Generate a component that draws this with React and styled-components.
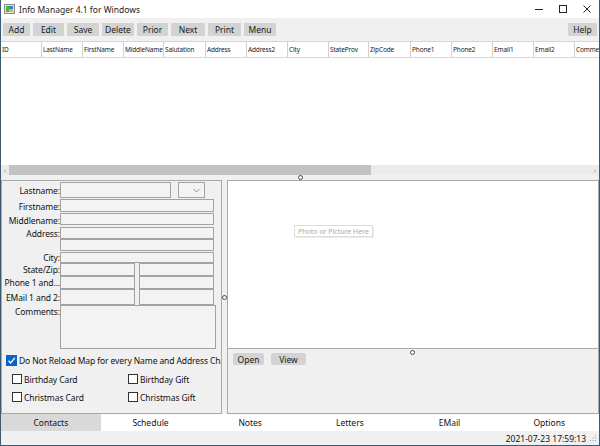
import React from "react";
import styled, { createGlobalStyle } from "styled-components";

const Global = createGlobalStyle`
  html, body { margin: 0; padding: 0; background: #ffffff; }
  * { box-sizing: border-box; }
`;

const Window = styled.div`
  width: 600px;
  height: 446px;
  border: 1px solid #3d5a70;
  border-top: none;
  background: #f0f0f0;
  display: flex;
  flex-direction: column;
  overflow: hidden;
  font-family: "Noto Sans", "Open Sans", sans-serif;
  color: #111;
`;

const TitleBar = styled.div`
  height: 18px;
  background: #ffffff;
  display: flex;
  align-items: center;
  padding-left: 3px;
  flex-shrink: 0;
`;

const TitleText = styled.span`
  font-size: 8.5px;
  margin-left: 4px;
  color: #1a1a1a;
`;

const Controls = styled.div`
  margin-left: auto;
  display: flex;
  height: 100%;
`;

const Ctl = styled.div`
  width: 24px;
  height: 100%;
  display: flex;
  align-items: center;
  justify-content: center;
`;

const Toolbar = styled.div`
  height: 23px;
  display: flex;
  align-items: center;
  gap: 3px;
  padding: 0 2px 0 2px;
  flex-shrink: 0;
`;

const TButton = styled.div`
  width: ${(p) => p.$w}px;
  height: 13px;
  background: #d3d3d3;
  border-radius: 1px;
  font-size: 8.5px;
  display: flex;
  align-items: center;
  justify-content: center;
  color: #1a1a1a;
  margin-left: ${(p) => (p.$push ? "auto" : "0")};
`;

const Grid = styled.div`
  display: flex;
  flex-direction: column;
  background: #ffffff;
  flex-shrink: 0;
`;

const HeaderRow = styled.div`
  height: 17px;
  display: flex;
  border-top: 1px solid #d6d6d6;
  border-bottom: 1px solid #d6d6d6;
  overflow: hidden;
`;

const HeaderCell = styled.div`
  width: ${(p) => p.$w}px;
  flex-shrink: 0;
  border-right: 1px solid #d2d2d2;
  font-size: 6.5px;
  letter-spacing: -0.15px;
  padding-left: 1px;
  display: flex;
  align-items: center;
  color: #222;
  white-space: nowrap;
  overflow: hidden;
`;

const GridBody = styled.div`
  height: 107px;
  background: #ffffff;
`;

const ScrollBar = styled.div`
  height: 10px;
  display: flex;
  background: #ebebeb;
`;

const ScrollArrow = styled.div`
  width: 8px;
  font-size: 7px;
  color: #9a9a9a;
  display: flex;
  align-items: center;
  justify-content: center;
  line-height: 1;
  margin-left: ${(p) => (p.$right ? "auto" : "0")};
`;

const Thumb = styled.div`
  width: 362px;
  background: #c2c2c2;
`;

const HSplitter = styled.div`
  height: 5px;
  display: flex;
  align-items: center;
  justify-content: center;
  flex-shrink: 0;
`;

const Handle = styled.div`
  width: 5px;
  height: 5px;
  border-radius: 50%;
  border: 1px solid #4a4a4a;
  background: #ffffff;
`;

const Main = styled.div`
  height: 234px;
  display: flex;
  flex-shrink: 0;
`;

const LeftPanel = styled.div`
  width: 221px;
  border: 1px solid #a8a8a8;
  padding: 1px 0 0 0;
  overflow: hidden;
  display: flex;
  flex-direction: column;
`;

const FormRow = styled.div`
  height: ${(p) => p.$h}px;
  display: flex;
  flex-shrink: 0;
`;

const Label = styled.div`
  width: 58px;
  flex-shrink: 0;
  font-size: 8.5px;
  letter-spacing: -0.1px;
  line-height: 11px;
  white-space: nowrap;
  display: flex;
  justify-content: flex-end;
  align-items: ${(p) => (p.$top ? "flex-start" : "center")};
  padding-top: ${(p) => (p.$top ? "1px" : "0")};
  color: #111;
`;

const Field = styled.div`
  width: ${(p) => p.$w}px;
  height: ${(p) => p.$h}px;
  border: 1px solid #a3a3a3;
  background: #f3f3f3;
  margin-left: ${(p) => p.$ml || 0}px;
  flex-shrink: 0;
  display: flex;
  align-items: center;
  justify-content: flex-end;
  padding-right: 4px;
`;

const CheckRow = styled.div`
  display: flex;
  align-items: center;
  height: ${(p) => p.$h}px;
  margin-top: ${(p) => p.$mt}px;
  padding-left: ${(p) => p.$pl}px;
  white-space: nowrap;
  flex-shrink: 0;
`;

const CheckItem = styled.div`
  display: flex;
  align-items: center;
  width: ${(p) => (p.$w ? `${p.$w}px` : "auto")};
  font-size: 8.5px;
  letter-spacing: -0.1px;
  color: #111;
`;

const Box = styled.div`
  width: ${(p) => p.$s}px;
  height: ${(p) => p.$s}px;
  border: 1px solid ${(p) => (p.$checked ? "#0a64c8" : "#333")};
  background: ${(p) => (p.$checked ? "#0a64c8" : "#ffffff")};
  margin-right: 2px;
  display: flex;
  align-items: center;
  justify-content: center;
  flex-shrink: 0;
`;

const VSplitter = styled.div`
  width: 5px;
  display: flex;
  align-items: center;
  justify-content: center;
  flex-shrink: 0;
`;

const RightPanel = styled.div`
  flex: 1;
  border: 1px solid #a8a8a8;
  display: flex;
  flex-direction: column;
`;

const Picture = styled.div`
  height: 168px;
  background: #ffffff;
  border-bottom: 1px solid #a8a8a8;
  padding: 44px 0 0 66px;
  flex-shrink: 0;
  display: flex;
  align-items: flex-start;
`;

const PhotoLabel = styled.div`
  display: flex;
  align-items: center;
  height: 12px;
  padding: 0 3px;
  border: 1px solid #dcdcdc;
  box-shadow: 1px 1px 0 #ececec;
  font-size: 7px;
  color: #a9a9a9;
  white-space: nowrap;
`;

const PicControls = styled.div`
  position: relative;
  display: flex;
  gap: 7px;
  padding: 4px 0 0 5px;
`;

const FloatHandle = styled(Handle)`
  position: absolute;
  left: 50%;
  top: 1px;
  margin-left: -3px;
`;

const SmallButton = styled.div`
  width: ${(p) => p.$w}px;
  height: 12px;
  background: #d3d3d3;
  border-radius: 2px;
  font-size: 8.5px;
  display: flex;
  align-items: center;
  justify-content: center;
  color: #1a1a1a;
`;

const Tabs = styled.div`
  height: 17px;
  display: flex;
  background: #ffffff;
  flex-shrink: 0;
`;

const Tab = styled.div`
  flex: 1;
  display: flex;
  align-items: center;
  justify-content: center;
  font-size: 8.5px;
  background: ${(p) => (p.$active ? "#d9d9d9" : "#ffffff")};
  color: #111;
`;

const Status = styled.div`
  flex: 1;
  display: flex;
  align-items: center;
  justify-content: flex-end;
  padding-right: 2px;
  font-size: 8.5px;
  color: #111;
  gap: 3px;
`;

const buttons = [
  ["Add", 27],
  ["Edit", 31],
  ["Save", 32],
  ["Delete", 32],
  ["Prior", 31],
  ["Next", 34],
  ["Print", 33],
  ["Menu", 32],
];

const columns = [
  ["ID", 41],
  ["LastName", 41],
  ["FirstName", 41],
  ["MiddleName", 40],
  ["Salutation", 42],
  ["Address", 41],
  ["Address2", 41],
  ["City", 41],
  ["StateProv", 40],
  ["ZipCode", 42],
  ["Phone1", 41],
  ["Phone2", 41],
  ["Email1", 41],
  ["Email2", 41],
  ["Comments", 60],
];

const tabs = ["Contacts", "Schedule", "Notes", "Letters", "EMail", "Options"];

const AppIcon = () => (
  <svg width="11" height="10" viewBox="0 0 11 10">
    <rect x="0.5" y="0.5" width="10" height="9" fill="#e8e4d0" stroke="#8a8a8a" />
    <rect x="2" y="2" width="3" height="6" fill="#4caf50" />
    <rect x="5" y="2" width="4" height="3" fill="#2e8bd8" />
    <rect x="5" y="5" width="4" height="3" fill="#f0b030" />
  </svg>
);

const Check = () => (
  <svg width="9" height="9" viewBox="0 0 9 9">
    <polyline points="1.5,4.8 3.6,7 7.8,1.8" fill="none" stroke="#ffffff" strokeWidth="1.3" />
  </svg>
);

export default function App() {
  return (
    <>
      <Global />
      <Window>
        <TitleBar>
          <AppIcon />
          <TitleText>Info Manager 4.1 for Windows</TitleText>
          <Controls>
            <Ctl>
              <svg width="8" height="8" viewBox="0 0 8 8">
                <line x1="0" y1="4.5" x2="8" y2="4.5" stroke="#222" strokeWidth="1" />
              </svg>
            </Ctl>
            <Ctl>
              <svg width="8" height="8" viewBox="0 0 8 8">
                <rect x="0.5" y="0.5" width="7" height="7" fill="none" stroke="#222" strokeWidth="1" />
              </svg>
            </Ctl>
            <Ctl>
              <svg width="8" height="8" viewBox="0 0 8 8">
                <path d="M0.5 0.5 L7.5 7.5 M7.5 0.5 L0.5 7.5" stroke="#222" strokeWidth="1" />
              </svg>
            </Ctl>
          </Controls>
        </TitleBar>

        <Toolbar>
          {buttons.map(([t, w]) => (
            <TButton key={t} $w={w}>
              {t}
            </TButton>
          ))}
          <TButton $w={29} $push>
            Help
          </TButton>
        </Toolbar>

        <Grid>
          <HeaderRow>
            {columns.map(([t, w]) => (
              <HeaderCell key={t} $w={w}>
                {t}
              </HeaderCell>
            ))}
          </HeaderRow>
          <GridBody />
          <ScrollBar>
            <ScrollArrow>‹</ScrollArrow>
            <Thumb />
            <ScrollArrow $right>›</ScrollArrow>
          </ScrollBar>
        </Grid>

        <HSplitter>
          <Handle />
        </HSplitter>

        <Main>
          <LeftPanel>
            <FormRow $h={17}>
              <Label>Lastname:</Label>
              <Field $w={111} $h={16} />
              <Field $w={27} $h={16} $ml={7}>
                <svg width="7" height="5" viewBox="0 0 7 5">
                  <polyline points="0.5,1 3.5,4 6.5,1" fill="none" stroke="#8a8a8a" strokeWidth="0.9" />
                </svg>
              </Field>
            </FormRow>
            <FormRow $h={14}>
              <Label>Firstname:</Label>
              <Field $w={154} $h={13} />
            </FormRow>
            <FormRow $h={14}>
              <Label>Middlename:</Label>
              <Field $w={154} $h={12} />
            </FormRow>
            <FormRow $h={12}>
              <Label $top>Address:</Label>
              <Field $w={154} $h={12} />
            </FormRow>
            <FormRow $h={13}>
              <Label />
              <Field $w={154} $h={12} />
            </FormRow>
            <FormRow $h={11}>
              <Label>City:</Label>
              <Field $w={154} $h={11} />
            </FormRow>
            <FormRow $h={13}>
              <Label>State/Zip:</Label>
              <Field $w={75} $h={13} />
              <Field $w={75} $h={13} $ml={4} />
            </FormRow>
            <FormRow $h={13}>
              <Label>Phone 1 and...</Label>
              <Field $w={75} $h={13} />
              <Field $w={75} $h={13} $ml={4} />
            </FormRow>
            <FormRow $h={16}>
              <Label>EMail 1 and 2:</Label>
              <Field $w={75} $h={16} />
              <Field $w={75} $h={16} $ml={4} />
            </FormRow>
            <FormRow $h={44}>
              <Label $top>Comments:</Label>
              <Field $w={156} $h={44} />
            </FormRow>

            <CheckRow $h={11} $mt={6} $pl={4}>
              <CheckItem>
                <Box $s={11} $checked>
                  <Check />
                </Box>
                Do Not Reload Map for every Name and Address Change
              </CheckItem>
            </CheckRow>
            <CheckRow $h={10} $mt={8} $pl={10}>
              <CheckItem $w={116}>
                <Box $s={10} />
                Birthday Card
              </CheckItem>
              <CheckItem>
                <Box $s={10} />
                Birthday Gift
              </CheckItem>
            </CheckRow>
            <CheckRow $h={10} $mt={8} $pl={10}>
              <CheckItem $w={116}>
                <Box $s={10} />
                Christmas Card
              </CheckItem>
              <CheckItem>
                <Box $s={10} />
                Christmas Gift
              </CheckItem>
            </CheckRow>
          </LeftPanel>

          <VSplitter>
            <Handle />
          </VSplitter>

          <RightPanel>
            <Picture>
              <PhotoLabel>Photo or Picture Here</PhotoLabel>
            </Picture>
            <PicControls>
              <FloatHandle />
              <SmallButton $w={31}>Open</SmallButton>
              <SmallButton $w={35}>View</SmallButton>
            </PicControls>
          </RightPanel>
        </Main>

        <Tabs>
          {tabs.map((t, i) => (
            <Tab key={t} $active={i === 0}>
              {t}
            </Tab>
          ))}
        </Tabs>

        <Status>
          2021-07-23 17:59:13
          <svg width="8" height="8" viewBox="0 0 8 8">
            <rect x="6" y="1" width="1" height="1" fill="#999" />
            <rect x="6" y="3.5" width="1" height="1" fill="#999" />
            <rect x="6" y="6" width="1" height="1" fill="#999" />
            <rect x="3.5" y="3.5" width="1" height="1" fill="#999" />
            <rect x="3.5" y="6" width="1" height="1" fill="#999" />
            <rect x="1" y="6" width="1" height="1" fill="#999" />
          </svg>
        </Status>
      </Window>
    </>
  );
}
